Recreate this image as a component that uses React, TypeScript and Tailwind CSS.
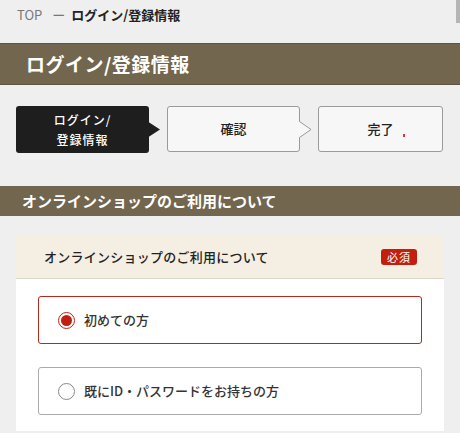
import React from "react";

const font = { fontFamily: '"Noto Sans CJK JP", "Noto Sans", sans-serif' };

export default function App() {
  return (
    <div className="w-[460px] h-[433px] overflow-hidden bg-[#efefef] relative" style={font}>
      <div className="absolute right-0 top-0 w-[4px] h-[23px] bg-[#b5b5b5]" />
      {/* breadcrumb */}
      <div className="h-[43px] pl-[17px] pt-[5px] flex items-start text-[13px] leading-[20px]">
        <span className="text-[#777]">TOP</span>
        <span className="text-[#777] ml-[10px]">ー</span>
        <span className="text-[#222] font-bold ml-[6px]">ログイン/登録情報</span>
      </div>
      {/* title banner */}
      <div className="h-[42px] bg-[#72664e] border-y border-[#5f5440] flex items-center pl-[26px]">
        <span className="text-white text-[19px] font-bold tracking-[0.5px]">ログイン/登録情報</span>
      </div>
      {/* steps */}
      <div className="flex pl-[16px] pt-[21px] h-[101px]">
        <div className="relative w-[133px] h-[47px] bg-[#1e1e1e] rounded-[3px] flex flex-col items-center justify-center text-white text-[12px] leading-[20px] font-medium tracking-[1px]">
          <span>ログイン/</span>
          <span>登録情報</span>
          <svg className="absolute left-[131px] top-[15px]" width="14" height="17" viewBox="0 0 14 17">
            <path d="M0 0 L13 8.5 L0 17 Z" fill="#1e1e1e" />
          </svg>
        </div>
        <div className="relative ml-[18px] w-[133px] h-[46px] bg-[#f7f7f7] border border-[#9a9a9a] rounded-[3px] flex items-center justify-center text-[13px] text-[#222] font-medium">
          <span>確認</span>
          <svg className="absolute left-[131px] top-[12px]" width="14" height="21" viewBox="0 0 14 21">
            <path d="M0 2.5 L12 10.5 L0 18.5 Z" fill="#f7f7f7" />
            <path d="M0.5 2.5 L12 10.5 L0.5 18.5" fill="none" stroke="#9a9a9a" strokeWidth="1" />
          </svg>
        </div>
        <div className="relative ml-[18px] w-[125px] h-[46px] bg-[#f7f7f7] border border-[#9a9a9a] rounded-[3px] flex items-center justify-center text-[13px] text-[#222] font-medium">
          <span>完了</span>
          <span className="absolute left-[84px] top-[27px] w-[2px] h-[3px] bg-[#e0304a]" />
        </div>
      </div>
      {/* section header */}
      <div className="h-[30px] bg-[#72664e] flex items-center pl-[22px]">
        <span className="text-white text-[15px] font-bold">オンラインショップのご利用について</span>
      </div>
      {/* card */}
      <div className="mx-[16px] mt-[20px] bg-white">
        <div className="h-[43px] bg-[#f4eee3] border-b border-[#ddd6c8] flex items-center justify-between pl-[28px] pr-[27px]">
          <span className="text-[13px] text-[#222] font-medium tracking-[0.25px]">オンラインショップのご利用について</span>
          <span className="bg-[#c2200e] text-white text-[11px] leading-[16px] px-[6px] rounded-[3px] tracking-[1px]">必須</span>
        </div>
        <div className="px-[22px] pt-[17px] pb-[16px] flex flex-col gap-[23px]">
          <div className="h-[48px] border border-[#b52a1a] rounded-[3px] flex items-center pl-[19px]">
            <span className="w-[17px] h-[17px] rounded-full border border-[#c2200e] flex items-center justify-center">
              <span className="w-[11px] h-[11px] rounded-full bg-[#c2200e]" />
            </span>
            <span className="ml-[9px] text-[13px] text-[#333] font-medium">初めての方</span>
          </div>
          <div className="h-[48px] border border-[#aaa] rounded-[3px] flex items-center pl-[19px]">
            <span className="w-[17px] h-[17px] rounded-full border border-[#888]" />
            <span className="ml-[9px] text-[13px] text-[#333] font-medium">既にID・パスワードをお持ちの方</span>
          </div>
        </div>
      </div>
    </div>
  );
}
